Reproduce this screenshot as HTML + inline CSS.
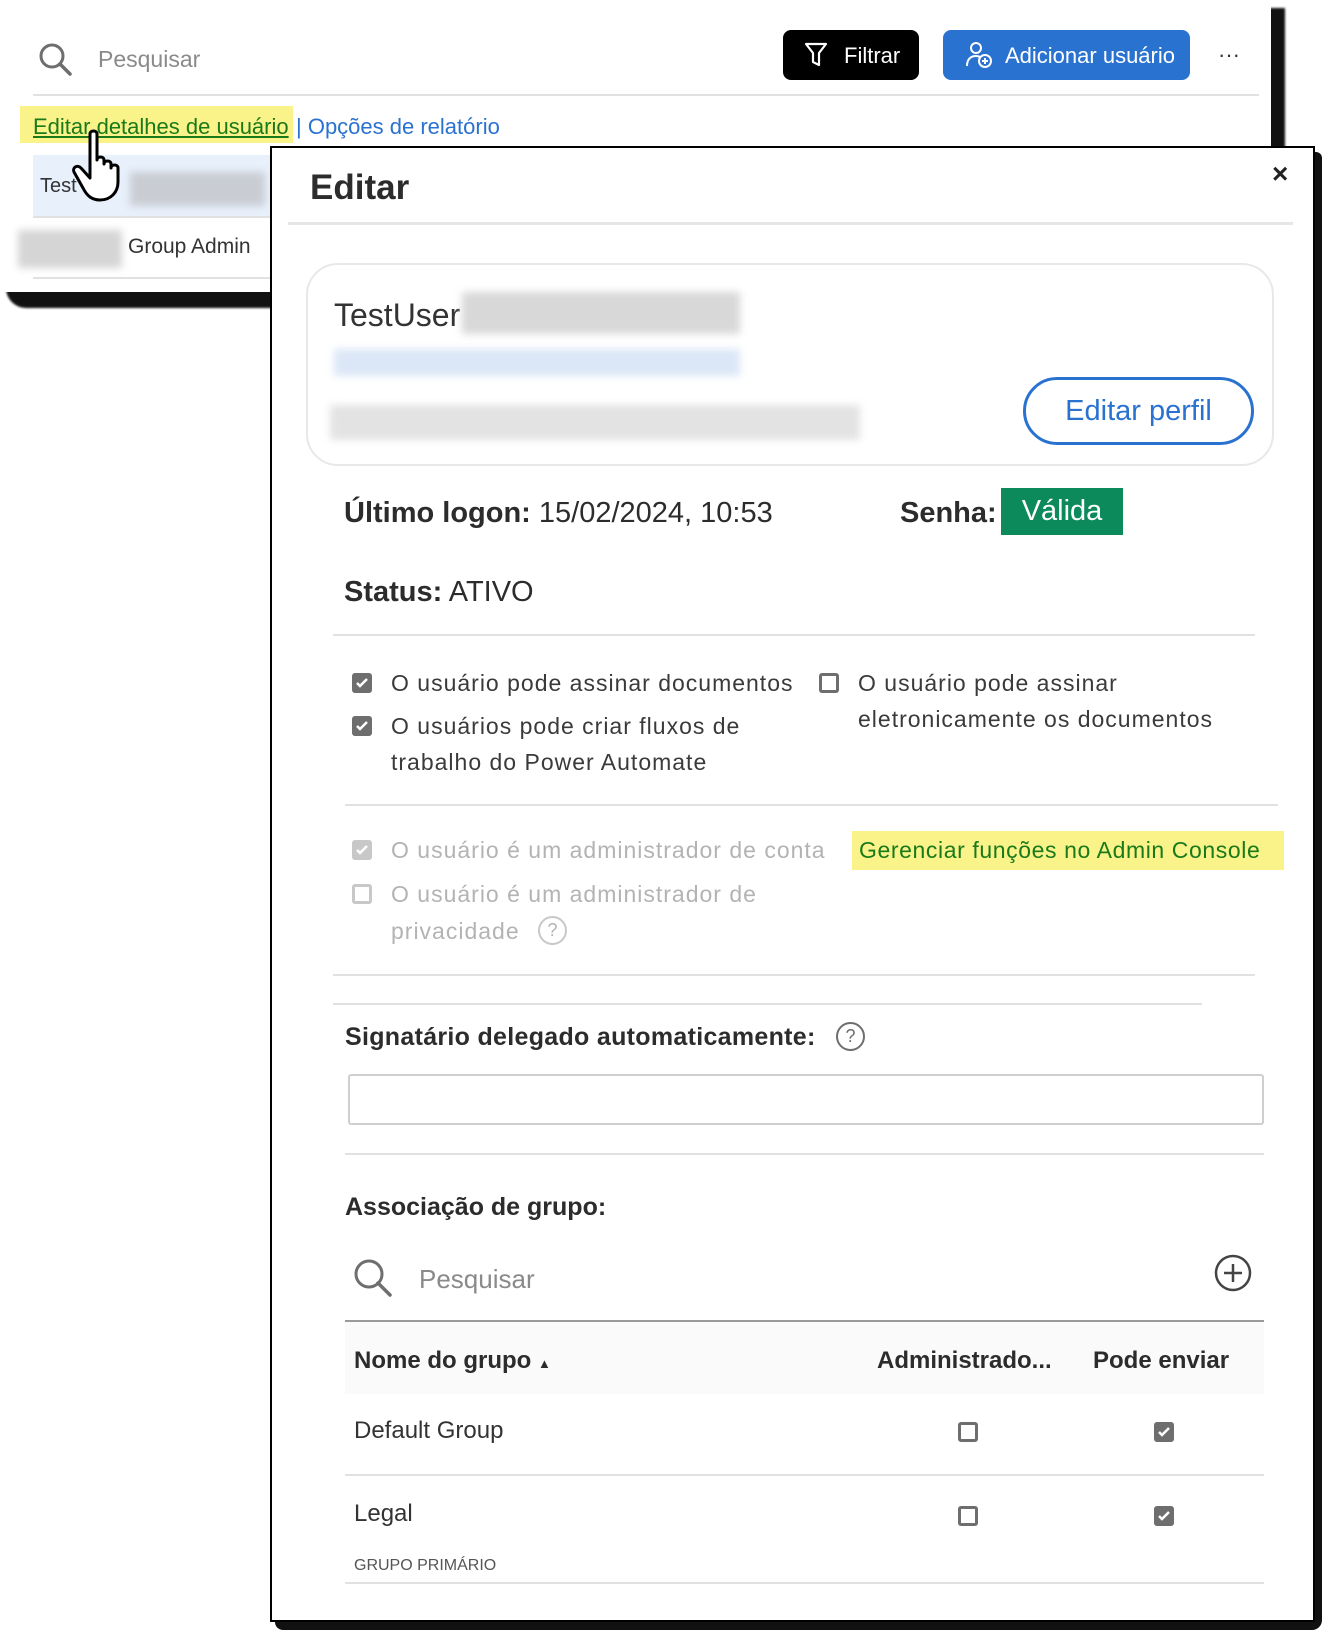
<!DOCTYPE html>
<html><head><meta charset="utf-8"><style>
*{margin:0;padding:0;box-sizing:border-box}
body{width:1331px;height:1636px;background:#fff;position:relative;overflow:hidden;font-family:"Liberation Sans","DejaVu Sans",sans-serif;color:#2c2c2c}
.a{position:absolute;white-space:nowrap}
.ln{position:absolute;height:2px;background:#e1e1e1}
.cb{position:absolute;width:20px;height:20px;border-radius:3px;background:#6e6e6e}
.cb svg{position:absolute;left:3px;top:4px}
.cbo{position:absolute;width:20px;height:20px;border-radius:3px;border:3px solid #6e6e6e;background:#fff}
.t23{font-size:23px;color:#3a3a3a;letter-spacing:1px}
.dis{color:#b3b3b3}
.blur{position:absolute;filter:blur(4px)}
</style></head><body>
<div class="a" style="width:1279px;height:300px;background:#111;border-radius:0 0 10px 20px;filter:blur(1px);left:6px;top:8px"></div>
<div class="a" style="left:0;top:0;width:1271px;height:292px;background:#fff"></div>
<svg class="a" style="left:38px;top:42px" width="36" height="36" viewBox="0 0 36 36"><circle cx="14" cy="14" r="11" fill="none" stroke="#6e6e6e" stroke-width="3"/><line x1="22" y1="22" x2="32" y2="32" stroke="#6e6e6e" stroke-width="3.5" stroke-linecap="round"/></svg>
<div class="a" style="left:98px;top:46px;font-size:23px;color:#8a8a8a">Pesquisar</div>
<div class="a" style="left:783px;top:30px;width:136px;height:50px;background:#000;border-radius:8px"></div>
<svg class="a" style="left:804px;top:42px" width="24" height="26" viewBox="0 0 24 26"><path d="M2 2h20l-7 9v12l-6-3v-9z" fill="none" stroke="#fff" stroke-width="2.2" stroke-linejoin="round"/></svg>
<div class="a" style="left:844px;top:43px;font-size:22px;color:#fff">Filtrar</div>
<div class="a" style="left:943px;top:30px;width:247px;height:50px;background:#2a72d0;border-radius:8px"></div>
<svg class="a" style="left:964px;top:40px" width="30" height="30" viewBox="0 0 30 30"><circle cx="12" cy="8" r="5" fill="none" stroke="#fff" stroke-width="2"/><path d="M3 26c0-7 4-10 9-10 2 0 3 .4 4 1" fill="none" stroke="#fff" stroke-width="2"/><circle cx="21" cy="21" r="6" fill="none" stroke="#fff" stroke-width="2"/><path d="M21 18v6M18 21h6" stroke="#fff" stroke-width="2"/></svg>
<div class="a" style="left:1005px;top:43px;font-size:22px;color:#fff">Adicionar usuário</div>
<div class="a" style="left:1218px;top:42px;font-size:22px;color:#333">···</div>
<div class="ln" style="left:33px;top:94px;width:1226px"></div>
<div class="a" style="left:20px;top:106px;width:273px;height:37px;background:#faf38a"></div>
<div class="a" style="left:33px;top:114px;font-size:22px;color:#1a7a1a;text-decoration:underline">Editar detalhes de usuário</div>
<div class="a" style="left:296px;top:114px;font-size:22px;color:#2a72d0">| Opções de relatório</div>
<div class="a" style="left:33px;top:155px;width:240px;height:61px;background:#e8f0fc"></div>
<div class="a" style="left:40px;top:175px;font-size:20px;color:#333">Test</div>
<div class="blur" style="left:130px;top:172px;width:135px;height:34px;background:#c9cdd3"></div>
<div class="ln" style="left:33px;top:216px;width:240px"></div>
<div class="blur" style="left:18px;top:230px;width:104px;height:38px;background:#d5d5d5"></div>
<div class="a" style="left:128px;top:235px;font-size:21px;color:#333">Group Admin</div>
<div class="ln" style="left:33px;top:277px;width:240px"></div>
<svg class="a" style="left:66px;top:128px" width="70" height="78" viewBox="0 0 70 78"><path d="M24 6c0-4 7-4 7 0v26c0-4 7-4 7 0v4c0-4 7-4 7 0v4c0-4 7-4 7 0v14c0 10-7 18-18 18-8 0-13-4-17-12L8 44c-2-4 3-8 7-4l9 10z" fill="#fff" stroke="#000" stroke-width="3" stroke-linejoin="round"/></svg>
<div class="a" style="left:275px;top:152px;width:1047px;height:1478px;background:#111;border-radius:0 6px 10px 8px"></div>
<div class="a" style="left:270px;top:146px;width:1045px;height:1476px;background:#fff;border:2px solid #000"></div>
<div class="a" style="left:310px;top:168px;font-size:35px;font-weight:bold;color:#2c2c2c">Editar</div>
<div class="a" style="left:1272px;top:158px;font-size:28px;font-weight:bold;color:#222">×</div>
<div class="a" style="left:288px;top:222px;width:1005px;height:3px;background:#e6e6e6"></div>
<div class="a" style="left:306px;top:263px;width:968px;height:203px;border:2px solid #e8e8e8;border-radius:32px"></div>
<div class="a" style="left:334px;top:297px;font-size:32px;color:#333">TestUser</div>
<div class="blur" style="left:462px;top:292px;width:278px;height:42px;background:#d8d8d8"></div>
<div class="blur" style="left:334px;top:349px;width:406px;height:27px;background:#dbe7f7"></div>
<div class="blur" style="left:330px;top:405px;width:530px;height:35px;background:#e3e3e3"></div>
<div class="a" style="left:1023px;top:377px;width:231px;height:68px;border:3px solid #2a72d0;border-radius:36px;font-size:29px;color:#2a72d0;text-align:center;line-height:62px">Editar perfil</div>
<div class="a" style="left:344px;top:497px;font-size:29px;color:#2c2c2c"><b>Último logon:</b> 15/02/2024, 10:53</div>
<div class="a" style="left:900px;top:497px;font-size:29px;font-weight:bold;color:#2c2c2c">Senha:</div>
<div class="a" style="left:1001px;top:488px;width:122px;height:47px;background:#0d8a5c;color:#fff;font-size:29px;text-align:center;line-height:47px">Válida</div>
<div class="a" style="left:344px;top:576px;font-size:29px;color:#2c2c2c"><b>Status:</b> ATIVO</div>
<div class="ln" style="left:333px;top:634px;width:922px"></div>
<div class="cb" style="left:352px;top:673px"><svg width="14" height="12" viewBox="0 0 14 12"><path d="M2 6l3 3 7-7" fill="none" stroke="#fff" stroke-width="2.5"/></svg></div>
<div class="a t23" style="left:391px;top:670px">O usuário pode assinar documentos</div>
<div class="cb" style="left:352px;top:716px"><svg width="14" height="12" viewBox="0 0 14 12"><path d="M2 6l3 3 7-7" fill="none" stroke="#fff" stroke-width="2.5"/></svg></div>
<div class="a t23" style="left:391px;top:708px;line-height:36px">O usuários pode criar fluxos de<br>trabalho do Power Automate</div>
<div class="cbo" style="left:819px;top:673px"></div>
<div class="a t23" style="left:858px;top:665px;line-height:36px">O usuário pode assinar<br>eletronicamente os documentos</div>
<div class="ln" style="left:345px;top:804px;width:933px"></div>
<div class="cb" style="left:352px;top:840px;background:#c8c8c8"><svg width="14" height="12" viewBox="0 0 14 12"><path d="M2 6l3 3 7-7" fill="none" stroke="#fff" stroke-width="2.5"/></svg></div>
<div class="a t23 dis" style="left:391px;top:837px">O usuário é um administrador de conta</div>
<div class="cbo" style="left:352px;top:884px;border-color:#c8c8c8"></div>
<div class="a t23 dis" style="left:391px;top:876px;line-height:37px">O usuário é um administrador de<br>privacidade</div>
<div class="a" style="left:538px;top:916px;width:29px;height:29px;border:2px solid #c8c8c8;border-radius:50%;color:#b3b3b3;font-size:18px;text-align:center;line-height:25px">?</div>
<div class="a" style="left:852px;top:831px;width:432px;height:39px;background:#faf38a"></div>
<div class="a t23" style="left:859px;top:837px;color:#1a7a1a;letter-spacing:.6px">Gerenciar funções no Admin Console</div>
<div class="ln" style="left:333px;top:974px;width:922px"></div>
<div class="ln" style="left:333px;top:1003px;width:869px"></div>
<div class="a" style="left:345px;top:1023px;font-size:25px;font-weight:bold;color:#2c2c2c;letter-spacing:.3px">Signatário delegado automaticamente:</div>
<div class="a" style="left:836px;top:1022px;width:29px;height:29px;border:2px solid #6e6e6e;border-radius:50%;color:#6e6e6e;font-size:18px;text-align:center;line-height:25px">?</div>
<div class="a" style="left:348px;top:1074px;width:916px;height:51px;border:2px solid #cfcfcf;border-radius:3px"></div>
<div class="ln" style="left:345px;top:1153px;width:919px"></div>
<div class="a" style="left:345px;top:1193px;font-size:25px;font-weight:bold;color:#2c2c2c">Associação de grupo:</div>
<svg class="a" style="left:353px;top:1258px" width="40" height="40" viewBox="0 0 40 40"><circle cx="16" cy="16" r="13" fill="none" stroke="#6e6e6e" stroke-width="3"/><line x1="25" y1="25" x2="37" y2="37" stroke="#6e6e6e" stroke-width="3.5" stroke-linecap="round"/></svg>
<div class="a" style="left:419px;top:1264px;font-size:26px;color:#8a8a8a">Pesquisar</div>
<svg class="a" style="left:1213px;top:1253px" width="40" height="40" viewBox="0 0 40 40"><circle cx="20" cy="20" r="17" fill="none" stroke="#444" stroke-width="2.5"/><path d="M20 11v18M11 20h18" stroke="#444" stroke-width="2.5"/></svg>
<div class="a" style="left:345px;top:1320px;width:919px;height:2px;background:#9a9a9a"></div>
<div class="a" style="left:345px;top:1322px;width:919px;height:72px;background:#fafafa"></div>
<div class="a" style="left:354px;top:1347px;font-size:24px;font-weight:bold;color:#2c2c2c">Nome do grupo <span style="font-size:13px">▲</span></div>
<div class="a" style="left:877px;top:1347px;font-size:24px;font-weight:bold;color:#2c2c2c">Administrado...</div>
<div class="a" style="left:1093px;top:1347px;font-size:24px;font-weight:bold;color:#2c2c2c">Pode enviar</div>
<div class="a" style="left:354px;top:1417px;font-size:24px;color:#333">Default Group</div>
<div class="cbo" style="left:958px;top:1422px"></div>
<div class="cb" style="left:1154px;top:1422px"><svg width="14" height="12" viewBox="0 0 14 12"><path d="M2 6l3 3 7-7" fill="none" stroke="#fff" stroke-width="2.5"/></svg></div>
<div class="ln" style="left:345px;top:1474px;width:919px"></div>
<div class="a" style="left:354px;top:1500px;font-size:24px;color:#333">Legal</div>
<div class="cbo" style="left:958px;top:1506px"></div>
<div class="cb" style="left:1154px;top:1506px"><svg width="14" height="12" viewBox="0 0 14 12"><path d="M2 6l3 3 7-7" fill="none" stroke="#fff" stroke-width="2.5"/></svg></div>
<div class="a" style="left:354px;top:1557px;font-size:16px;color:#555">GRUPO PRIMÁRIO</div>
<div class="ln" style="left:345px;top:1582px;width:919px"></div>
</body></html>
